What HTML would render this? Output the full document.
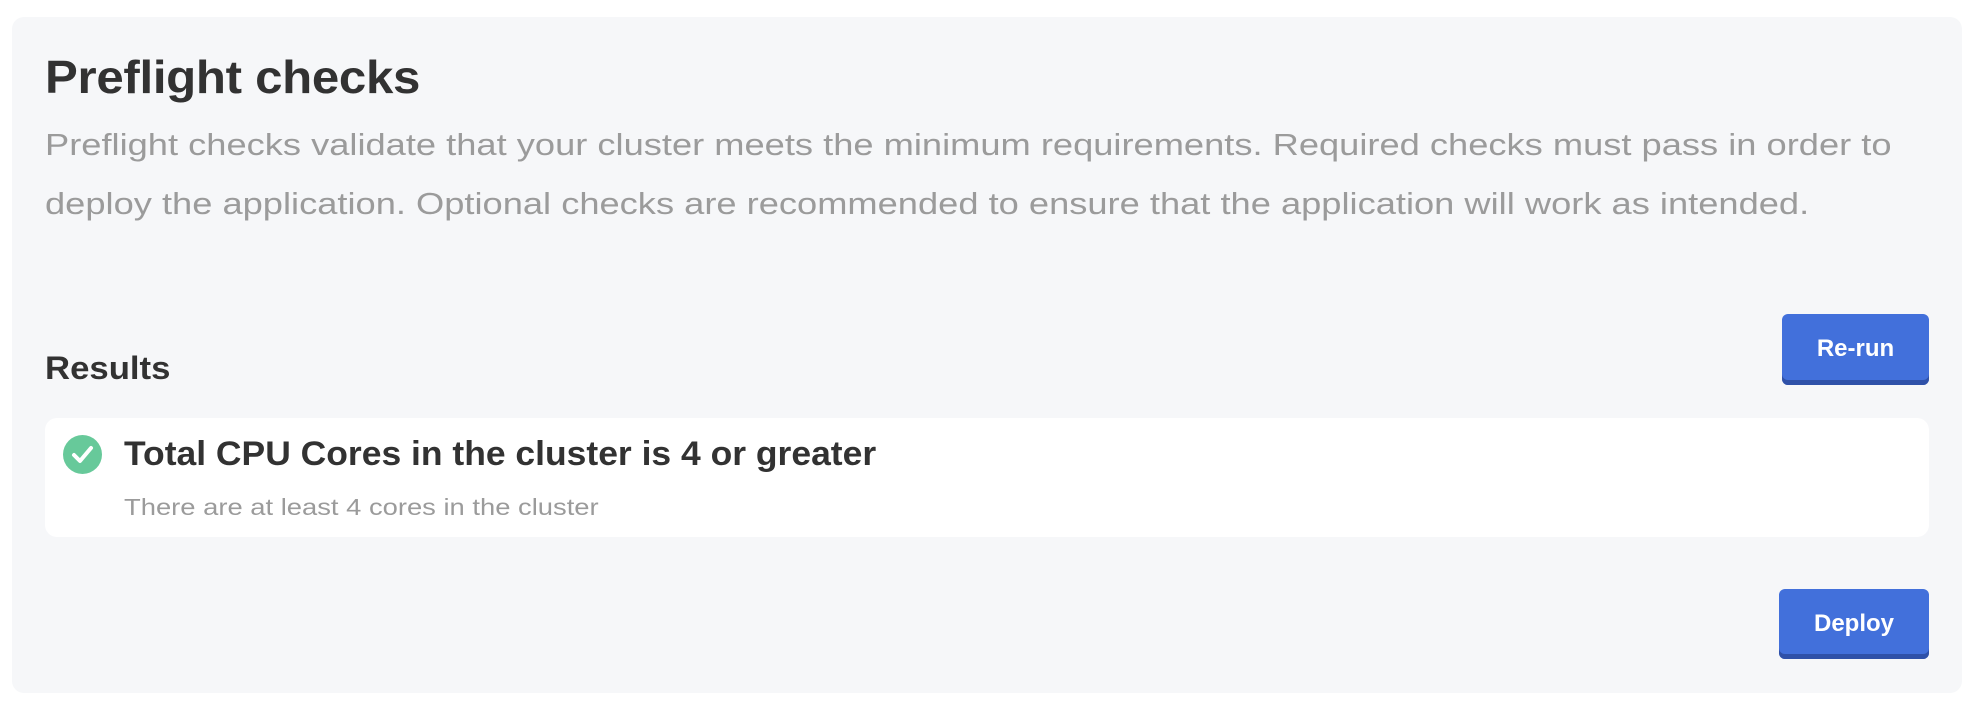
<!DOCTYPE html>
<html><head><style>
html,body{margin:0;padding:0;background:#fff;width:1976px;height:706px;overflow:hidden;font-family:"Liberation Sans",Arial,sans-serif;}
.panel{position:absolute;left:12px;top:17px;width:1950px;height:676px;background:#f6f7f9;border-radius:12px;}
.t{position:absolute;white-space:nowrap;transform-origin:0 0;}
.btn{position:absolute;background:#4270db;border-radius:6px;box-shadow:inset 0 -5px 0 #2f51a8;color:#fff;font-weight:bold;font-size:24px;text-align:center;}
.card{position:absolute;left:45px;top:418px;width:1884px;height:119px;background:#fff;border-radius:12px;}
</style></head><body>
<div class="panel"></div>
<div class="t" style="left:45px;top:50px;font-size:46px;font-weight:bold;color:#323232;letter-spacing:-0.3px;transform:scaleX(1.07);">Preflight checks</div>
<div class="t" style="left:45px;top:115px;font-size:31px;color:#9b9b9b;line-height:59px;transform:scaleX(1.17);">Preflight checks validate that your cluster meets the minimum requirements. Required checks must pass in order to<br>deploy the application. Optional checks are recommended to ensure that the application will work as intended.</div>
<div class="t" style="left:45px;top:350px;font-size:32px;font-weight:bold;color:#323232;transform:scaleX(1.085);">Results</div>
<div class="btn" style="left:1782px;top:314px;width:147px;height:71px;line-height:70px;">Re-run</div>
<div class="card"></div>
<svg style="position:absolute;left:63px;top:435px" width="39" height="39" viewBox="0 0 39 39"><circle cx="19.5" cy="19.5" r="19.5" fill="#67c99a"/><path d="M11 20 L17 26 L28 13" stroke="#fff" stroke-width="4" fill="none" stroke-linecap="round" stroke-linejoin="round"/></svg>
<div class="t" style="left:124px;top:435px;font-size:34px;font-weight:bold;color:#323232;transform:scaleX(1.043);">Total CPU Cores in the cluster is 4 or greater</div>
<div class="t" style="left:124px;top:494px;font-size:23px;color:#9b9b9b;transform:scaleX(1.19);">There are at least 4 cores in the cluster</div>
<div class="btn" style="left:1779px;top:589px;width:150px;height:70px;line-height:70px;">Deploy</div>
</body></html>
